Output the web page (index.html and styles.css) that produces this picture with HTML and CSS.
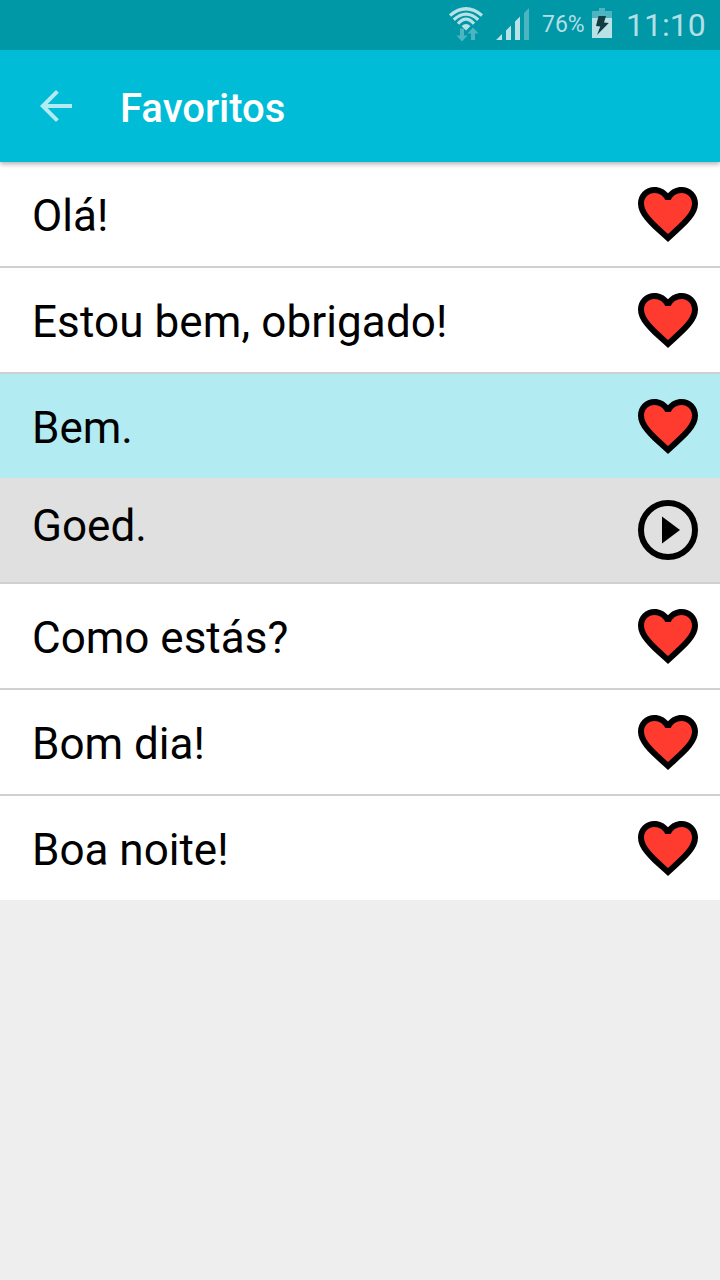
FILE: index.html
```html
<!DOCTYPE html>
<html lang="pt">
<head>
<meta charset="utf-8">
<title>Favoritos</title>
<link rel="stylesheet" href="styles.css">
</head>
<body>
<svg class="defs" width="0" height="0">
  <symbol id="heart" viewBox="0 0 24 24">
    <path fill="#ff3b2f" d="M12 19.5L3 10V6l4-2 5 3 5-3 4 2v4z"/>
    <path d="M16.5 3c-1.74 0-3.41.81-4.5 2.09C10.91 3.81 9.24 3 7.5 3 4.42 3 2 5.42 2 8.5c0 3.78 3.4 6.86 8.55 11.54L12 21.35l1.45-1.32C18.6 15.36 22 12.28 22 8.5 22 5.42 19.58 3 16.5 3zm-4.4 15.55l-.1.1-.1-.1C7.14 14.24 4 11.39 4 8.5 4 6.5 5.5 5 7.5 5c1.54 0 3.04.99 3.57 2.36h1.87C13.46 5.99 14.96 5 16.5 5c2 0 3.5 1.5 3.5 3.5 0 2.89-3.14 5.74-7.9 10.05z"/>
  </symbol>
</svg>
<header class="top">
  <div class="status">
    <svg class="wifi" width="36" height="36" viewBox="448 6 36 36">
      <g fill="none" stroke="#b9e2e7" stroke-width="3.2">
        <path d="M450 15.500Q466 2 482 15.500"/>
        <path d="M453.800 19.700Q466 8.500 478.200 19.700"/>
        <path d="M458 23.800Q466 14.500 474 23.800"/>
      </g>
      <path fill="#b9e2e7" d="M461.500 26Q466 21.800 470.500 26L466 30.500z"/>
      <path fill="#4db5c0" d="M460 28.500h4v7h3.500l-5.500 6-5.500-6h3.500zM471 40v-6.500h-3.500l5.500-6 5.500 6H475V40z"/>
    </svg>
    <svg class="signal" width="34" height="34" viewBox="496 7 34 34">
      <path fill="#b9e2e7" d="M496 40l6-6V40zM506 30.500l5-5V40h-5zM515 21.500l5-5V40h-5z"/>
      <path fill="#4db5c0" d="M524 13l5-5v32h-5z"/>
    </svg>
    <span class="percent">76%</span>
    <svg class="battery" width="20" height="30" viewBox="592 8 20 30">
      <path fill="#4db5c0" d="M592 11h7V8h6v3h7v7h-20z"/>
      <path fill="#b9e2e7" d="M592 18h20v20h-20z"/>
      <path fill="#123c42" d="M598.500 16h7.500l-2 6.500 4.800.5L597 35l3.300-8.500-4.300-.5z"/>
    </svg>
    <time class="clock">11:10</time>
  </div>
  <div class="appbar">
    <svg width="48" height="48" viewBox="0 0 24 24"><path fill="#b2ebf2" d="M20 11H7.830l5.590-5.590L12 4l-8 8 8 8 1.410-1.410L7.830 13H20v-2z"/></svg>
    <h1>Favoritos</h1>
  </div>
</header>
<main class="list">
  <div class="row"><span>Olá!</span><svg class="icon"><use href="#heart"/></svg></div>
  <div class="row"><span class="long">Estou bem, obrigado!</span><svg class="icon"><use href="#heart"/></svg></div>
  <div class="row selected"><span>Bem.</span><svg class="icon"><use href="#heart"/></svg></div>
  <div class="row translation"><span>Goed.</span><svg class="icon" viewBox="0 0 24 24"><circle cx="12" cy="12" r="9" fill="none" stroke="#000" stroke-width="2"/><path d="M10 16.500l6-4.500-6-4.500z"/></svg></div>
  <div class="row"><span>Como estás?</span><svg class="icon"><use href="#heart"/></svg></div>
  <div class="row"><span>Bom dia!</span><svg class="icon"><use href="#heart"/></svg></div>
  <div class="row"><span>Boa noite!</span><svg class="icon"><use href="#heart"/></svg></div>
</main>
</body>
</html>
```
FILE: styles.css
```css
* { box-sizing: border-box; }
body {
  margin: 0;
  min-height: 1280px;
  background: #eee;
  color: #000;
  font-family: Roboto, "Noto Sans", sans-serif;
}
svg { display: block; flex: none; }
.defs { position: absolute; }
.top {
  position: relative;
  box-shadow: 0 2px 5px rgba(0, 0, 0, .32);
}
.status {
  display: flex;
  height: 50px;
  padding-left: 448px;
  background: #0097a7;
  color: #b2dfe4;
  white-space: nowrap;
}
.wifi { margin-top: 6px; }
.signal { margin: 7px 0 0 12px; }
.percent {
  width: 50px;
  margin-left: 12px;
  font-size: 23px;
  line-height: 50px;
}
.battery { margin-top: 8px; }
.clock {
  margin-left: 14px;
  font-size: 32px;
  line-height: 50px;
}
.appbar {
  display: flex;
  align-items: center;
  height: 112px;
  padding-left: 32px;
  background: #00bcd6;
}
h1 {
  margin: 0 0 0 40px;
  padding-top: 4px;
  color: #fff;
  font-size: 40px;
  font-weight: 500;
}
.row {
  display: flex;
  align-items: center;
  justify-content: space-between;
  height: 106px;
  padding: 0 16px 0 32px;
  border-bottom: 2px solid #d0d0d0;
  background: #fff;
  font-size: 44px;
}
.row span { padding-top: 4px; }
.row .long { letter-spacing: .1px; }
.row.selected {
  height: 104px;
  border-bottom: 0;
  background: #b2ebf2;
}
.row.translation { background: #e0e0e0; }
.row.translation span { padding: 0 0 8px; }
.row:last-child {
  height: 104px;
  border-bottom: 0;
}
.icon { width: 72px; height: 72px; }
```
